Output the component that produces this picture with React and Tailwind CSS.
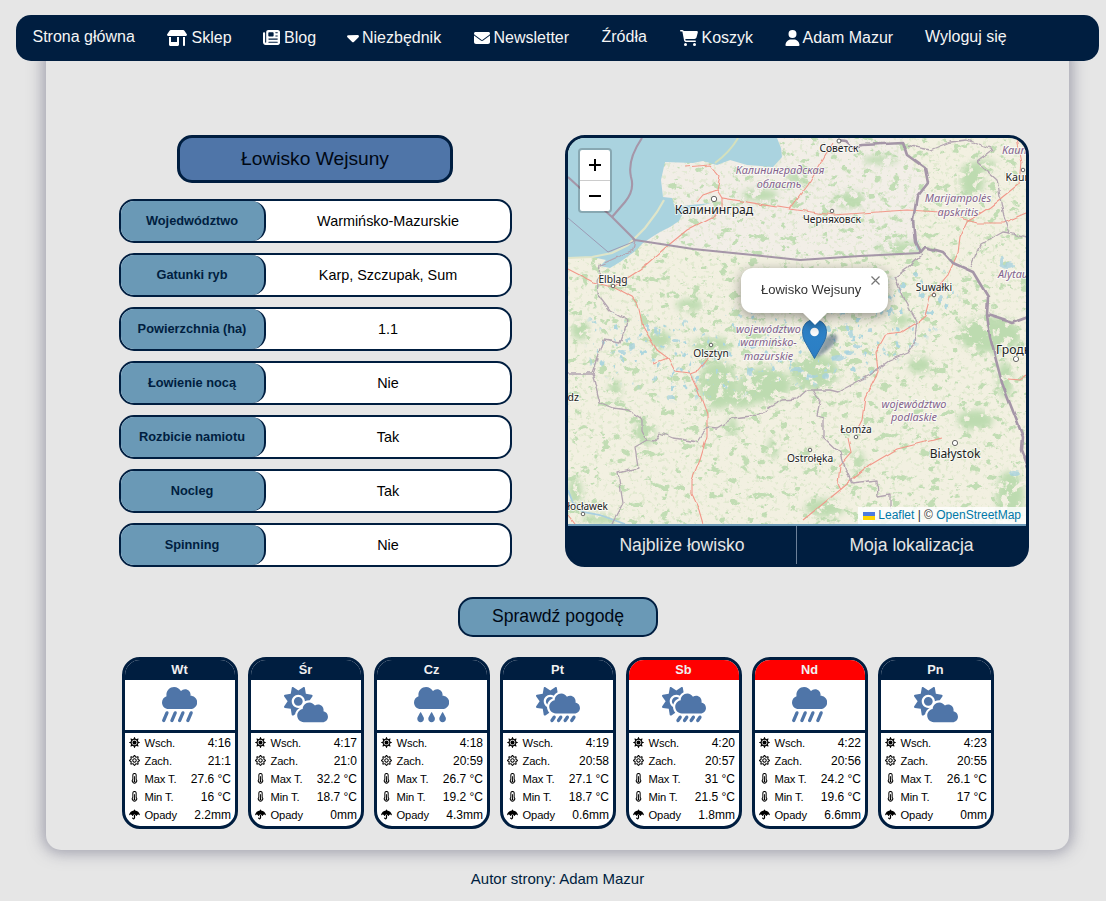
import React from "react";
import {
  FaShop,
  FaNewspaper,
  FaCaretDown,
  FaEnvelope,
  FaCartShopping,
  FaUser,
  FaCloudShowersHeavy,
  FaCloudSun,
  FaCloudRain,
  FaCloudSunRain,
} from "react-icons/fa6";
import { FaSun, FaRegSun, FaUmbrella } from "react-icons/fa";

const NAV = [
  { label: "Strona główna", box: "w-[134.5px]" },
  { label: "Sklep", Icon: FaShop, icon: "w-[20px] h-[16px] mr-[4.5px]", box: "w-[96px]" },
  { label: "Blog", Icon: FaNewspaper, icon: "w-[17px] h-[17px] mr-[4px]", box: "w-[84px]" },
  { label: "Niezbędnik", Icon: FaCaretDown, icon: "w-[12px] h-[19px] mr-[3px]", box: "w-[126.5px]" },
  { label: "Newsletter", Icon: FaEnvelope, icon: "w-[16px] h-[16px] mr-[4px]", box: "w-[128px]" },
  { label: "Źródła", box: "w-[78px]" },
  { label: "Koszyk", Icon: FaCartShopping, icon: "w-[18px] h-[16px] mr-[4px]", box: "w-[105.5px]" },
  { label: "Adam Mazur", Icon: FaUser, icon: "w-[15px] h-[16px] mr-[2.5px]", box: "w-[140px]" },
  { label: "Wyloguj się", box: "w-[100px]" },
];

const DETAILS = [
  ["Wojedwództwo", "Warmińsko-Mazurskie"],
  ["Gatunki ryb", "Karp, Szczupak, Sum"],
  ["Powierzchnia (ha)", "1.1"],
  ["Łowienie nocą", "Nie"],
  ["Rozbicie namiotu", "Tak"],
  ["Nocleg", "Tak"],
  ["Spinning", "Nie"],
];

const DAYS = [
  { day: "Wt", Icon: FaCloudShowersHeavy, values: ["4:16", "21:1", "27.6 °C", "16 °C", "2.2mm"] },
  { day: "Śr", Icon: FaCloudSun, wide: true, values: ["4:17", "21:0", "32.2 °C", "18.7 °C", "0mm"] },
  { day: "Cz", Icon: FaCloudRain, values: ["4:18", "20:59", "26.7 °C", "19.2 °C", "4.3mm"] },
  { day: "Pt", Icon: FaCloudSunRain, wide: true, values: ["4:19", "20:58", "27.1 °C", "18.7 °C", "0.6mm"] },
  { day: "Sb", Icon: FaCloudSunRain, wide: true, weekend: true, values: ["4:20", "20:57", "31 °C", "21.5 °C", "1.8mm"] },
  { day: "Nd", Icon: FaCloudShowersHeavy, weekend: true, values: ["4:22", "20:56", "24.2 °C", "19.6 °C", "6.6mm"] },
  { day: "Pn", Icon: FaCloudSun, wide: true, values: ["4:23", "20:55", "26.1 °C", "17 °C", "0mm"] },
];

function Thermometer({ className }) {
  return (
    <svg viewBox="0 0 12 12" className={className} fill="none" stroke="currentColor">
      <path d="M4.2 6.9V2.3a1.8 1.8 0 0 1 3.6 0v4.6a2.4 2.4 0 1 1-3.6 0Z" strokeWidth="1.1" />
      <path d="M6 3.5v5.7" strokeWidth="1" />
      <circle cx="6" cy="8.9" r="1" fill="currentColor" stroke="none" />
    </svg>
  );
}

const METRICS = [
  ["Wsch.", FaSun],
  ["Zach.", FaRegSun],
  ["Max T.", Thermometer],
  ["Min T.", Thermometer],
  ["Opady", FaUmbrella],
];

function Nav() {
  return (
    <nav className="relative z-10 ml-[16px] flex h-[46px] w-[1083px] rounded-[15px] bg-[#001e40] pl-[16.5px] text-[16px] leading-[20px] text-[#f5f5f5]">
      {NAV.map(({ label, Icon, icon, box }) => (
        <a key={label} className={`${box} flex shrink-0 items-center whitespace-nowrap ${Icon ? "pb-[1px]" : "pb-[3px]"}`}>
          {Icon && <Icon className={`${icon} shrink-0 text-white`} />}
          {label}
        </a>
      ))}
    </nav>
  );
}

const SEA =
  "M568 138 L777 138 L781 148 L782 157 L773 167 L747 165 L730 160 L717 165 L703 161 L693 163 L665 162 L661 180 L663 197 L672 198 L675 208 L690 205 L712 203 L690 208 L683 213 L679 221 L670 227 L660 232 L652 237 L643 243 L634 252 L627 257 L620 262 L610 268 L600 266 L606 260 L592 257 L568 257 Z";

const MAJOR_BORDERS = [
  "M568 177 L580 188 L612 217 L635 240 L693 249 L753 255 L800 260 L860 256 L920 253",
  "M920 253 L925 247 L943 252 L953 263 L973 272 L988 297 L987 315 L1000 319 L1012 323 L1028 317",
  "M987 315 L990 337 L1002 383 L1023 437 L1022 450 L1028 467",
  "M920 253 L915 243 L913 220 L917 197 L928 183 L925 168 L907 155 L903 143 L863 145 L853 147 L846 141 L838 140",
  "M642 138 Q627 160 631 177 Q635 190 625 202 L612 217",
];

const MINOR_BORDERS = [
  "M922 255 L908 268 L895 277 L905 300 L918 323 L915 342 L907 353 L890 360 L870 375 L838 392 L830 390 L807 390 L797 399 L782 400 L770 407 L760 415 L733 418 L717 428 L707 427 L697 442 L673 438 L660 433 L655 441 L647 440 L642 430 L642 420 L627 410 L613 408 L600 403 L592 373 L568 373",
  "M592 373 L603 340 L620 343 L628 320 L610 310 L597 293 L600 265 L633 250 L635 240",
  "M647 440 L635 447 L638 468 L618 473 L623 503 L612 524",
  "M813 390 L820 401 L817 415 L823 417 L823 437 L840 453 L843 463 L852 483 L877 480 L878 497 L890 495 L890 510",
  "M907 145 L930 150 L950 142 L967 140 L993 150 L977 162 L997 180 L1003 213 L1010 233 L1026 238",
  "M970 268 L980 245 L1003 232 L1010 233",
];

const ROADS = [
  "M568 269 L593 282 L613 287 L632 297 L638 305 L643 327 L657 350 L668 358 L675 371 L690 373 L698 370 L706 360 L711 350",
  "M690 373 L698 390 L707 414 L707 437 L700 460 L692 480 L692 495 L699 510 L703 524",
  "M613 287 L640 270 L665 248 L687 230 L712 217 L722 207 L722 198 L790 209 L833 215 L907 210 L940 212 L977 223 L1003 223 L1026 213",
  "M790 209 L808 185 L833 143",
  "M685 167 L710 165 L720 177 L717 190 L703 195 L697 202",
  "M717 190 L722 198",
  "M967 222 L960 237 L958 253 L947 277 L930 297 L925 316 L918 322 L902 332 L886 334 L876 352 L878 372 L865 397 L862 420 L858 428",
  "M848 438 L851 452 L840 465 L838 484 L841 490",
  "M803 520 L840 490 L870 465 L897 449 L942 438",
  "M1017 138 L1022 163 L1020 183 L990 207 L967 222",
  "M568 515 L575 524",
  "M654 363 L668 358",
  "M1008 379 L1019 380 L1026 375",
];

const LAKES = [
  [797, 370, 7, 2], [812, 376, 5, 2], [838, 358, 6, 3], [849, 353, 5, 2], [857, 346, 4, 2], [826, 376, 3, 3],
  [1008, 266, 6, 3], [1002, 262, 2, 5], [1014, 473, 6, 2], [622, 352, 4, 2], [632, 346, 3, 4], [671, 397, 3, 2],
  [676, 340, 3, 2], [703, 365, 2, 3], [917, 244, 2, 5], [940, 300, 2, 4], [915, 275, 3, 2], [730, 353, 2, 2],
  [656, 330, 2, 3], [870, 330, 3, 2], [851, 334, 2, 4], [900, 290, 2, 3], [750, 372, 2, 4],
];

const FORESTS = [
  [718, 385, 20, 24], [765, 385, 26, 18], [815, 372, 24, 18], [740, 400, 16, 8], [660, 340, 12, 9], [645, 432, 10, 14],
  [990, 335, 32, 18], [972, 180, 12, 18], [900, 248, 24, 6], [850, 200, 16, 8], [975, 420, 18, 10], [1010, 495, 14, 24],
  [575, 492, 7, 14], [920, 365, 12, 8], [858, 462, 6, 12], [985, 165, 12, 5], [880, 160, 18, 4], [760, 195, 18, 6],
  [1005, 380, 8, 18], [732, 428, 5, 11], [712, 345, 20, 8], [690, 305, 14, 6], [615, 390, 6, 10], [800, 178, 14, 6],
  [825, 508, 20, 9], [580, 330, 9, 10], [600, 519, 18, 5], [773, 448, 5, 11], [770, 155, 9, 9], [900, 320, 10, 6],
];

const TOWNS = [
  [839, 141, 2], [714, 199, 2.7], [832, 211, 1.8], [613, 286, 1.8], [934, 295, 1.8], [1023, 170, 1.8], [711, 345, 1.8],
  [1016, 359, 2.6], [856, 437, 1.8], [955, 443, 2.6], [810, 450, 1.8], [583, 514, 1.8],
];

const CITIES = [
  [839, 152, "Советск", 10.2], [714, 213.5, "Калининград", 12.2], [832, 223, "Черняховск", 10.2], [613, 282.5, "Elbląg", 10.2],
  [934, 291, "Suwałki", 10.2], [711, 356.5, "Olsztyn", 10.2], [856, 433, "Łomża", 10.2], [955, 457.5, "Białystok", 12],
  [810, 462, "Ostrołęka", 10.2],
];

const REGIONS = [
  [780, 174, "Калининградская"], [779, 187.5, "область"], [958, 202, "Marijampolės"], [958, 215.5, "apskritis"],
  [768.5, 332.5, "województwo"], [768.5, 346, "warmińsko-"], [768.5, 359.5, "mazurskie"], [914, 407.5, "województwo"],
  [914, 421, "podlaskie"],
];

function MapTiles() {
  return (
    <svg viewBox="568 138 458 386" className="block h-[386px] w-[458px]">
      <defs>
        <filter id="forest" x="0" y="0" width="100%" height="100%" colorInterpolationFilters="sRGB">
          <feTurbulence type="fractalNoise" baseFrequency="0.1 0.12" numOctaves="5" seed="11" />
          <feColorMatrix values="0 0 0 0 0.74  0 0 0 0 0.86  0 0 0 0 0.69  13 0 0 0 -8.1" />
        </filter>
        <filter id="woods" x="0" y="0" width="100%" height="100%" colorInterpolationFilters="sRGB">
          <feTurbulence type="fractalNoise" baseFrequency="0.11" numOctaves="5" seed="5" />
          <feColorMatrix values="0 0 0 0 0.74  0 0 0 0 0.86  0 0 0 0 0.69  12 0 0 0 -4.5" />
        </filter>
        <filter id="meadow" x="0" y="0" width="100%" height="100%" colorInterpolationFilters="sRGB">
          <feTurbulence type="fractalNoise" baseFrequency="0.24" numOctaves="3" seed="23" />
          <feColorMatrix values="0 0 0 0 0.82  0 0 0 0 0.89  0 0 0 0 0.75  8 0 0 0 -4.7" />
        </filter>
        <filter id="ponds" x="0" y="0" width="100%" height="100%" colorInterpolationFilters="sRGB">
          <feTurbulence type="fractalNoise" baseFrequency="0.16 0.12" numOctaves="3" seed="37" />
          <feColorMatrix values="0 0 0 0 0.68  0 0 0 0 0.84  0 0 0 0 0.87  12 0 0 0 -8" />
        </filter>
        <filter id="jagged" x="-5%" y="-5%" width="110%" height="110%">
          <feTurbulence type="fractalNoise" baseFrequency="0.14" numOctaves="1" seed="3" />
          <feDisplacementMap in="SourceGraphic" scale="6" xChannelSelector="R" yChannelSelector="G" />
        </filter>
        <filter id="winding" x="-5%" y="-5%" width="110%" height="110%">
          <feTurbulence type="fractalNoise" baseFrequency="0.08" numOctaves="1" seed="9" />
          <feDisplacementMap in="SourceGraphic" scale="4" xChannelSelector="R" yChannelSelector="G" />
        </filter>
        <filter id="soft" x="-20%" y="-20%" width="140%" height="140%">
          <feGaussianBlur stdDeviation="3" />
        </filter>
        <filter id="pinShadow" x="-50%" y="-50%" width="200%" height="200%">
          <feGaussianBlur stdDeviation="1.8" />
        </filter>
        <mask id="woodsArea">
          <g fill="#fff" filter="url(#soft)">
            {FORESTS.map(([x, y, rx, ry], i) => (
              <ellipse key={i} cx={x} cy={y} rx={rx} ry={ry} />
            ))}
          </g>
        </mask>
        <mask id="lakeArea">
          <path d="M590 310 L690 320 L790 300 L950 270 L960 310 L870 380 L680 400 L590 370Z" fill="#fff" filter="url(#soft)" />
        </mask>
        <linearGradient id="pin" x1="0" y1="0" x2="0" y2="1">
          <stop offset="0" stopColor="#2e83c8" />
          <stop offset="1" stopColor="#2b7ec4" />
        </linearGradient>
      </defs>

      <rect x="568" y="138" width="458" height="386" fill="#f2f0e1" />
      <path d="M635 240 L693 248 L753 255 L800 260 L920 253 L913 220 L928 183 L907 155 L903 138 L650 138Z" fill="#f2eee7" />
      <rect x="568" y="138" width="458" height="386" filter="url(#meadow)" opacity="0.5" />
      <rect x="568" y="138" width="458" height="386" filter="url(#forest)" opacity="0.9" />
      <g mask="url(#woodsArea)">
        <rect x="568" y="138" width="458" height="386" filter="url(#woods)" />
      </g>
      <g mask="url(#lakeArea)">
        <rect x="568" y="138" width="458" height="386" filter="url(#ponds)" />
      </g>
      <g fill="#a9d3df" filter="url(#jagged)" opacity="0.8">
        {LAKES.map(([x, y, rx, ry], i) => (
          <ellipse key={i} cx={x} cy={y} rx={rx} ry={ry} />
        ))}
      </g>
      <path d={SEA} fill="#aad3df" />
      <path d="M568 258 L592 257 L612 253 L628 245 L645 228 L657 212 L664 200" fill="none" stroke="#dfe5c9" strokeWidth="2.2" />
      <path d="M715 163 Q730 152 738 138" fill="none" stroke="#d4e0bd" strokeWidth="2" />
      <path d="M568 490 L573 503 L583 512 L600 515 L625 524" fill="none" stroke="#a9cfe0" strokeWidth="1.8" />

      <g fill="none" stroke="#f2988a" strokeWidth="1.1" filter="url(#winding)">
        {ROADS.map((d) => (
          <path key={d} d={d} />
        ))}
      </g>
      <g fill="none" stroke="#b3a5b1" strokeWidth="1.3" strokeLinejoin="round" filter="url(#jagged)">
        {MINOR_BORDERS.map((d) => (
          <path key={d} d={d} />
        ))}
      </g>
      <path d="M568 218 L608 252 L633 242" fill="none" stroke="#9a94b0" strokeWidth="0.9" />
      <g fill="none" stroke="#a596a8" strokeWidth="2.1" strokeLinejoin="round">
        <path d={MAJOR_BORDERS[0]} />
        <path d={MAJOR_BORDERS[4]} />
        <g filter="url(#winding)" strokeWidth="2.6">
          <path d={MAJOR_BORDERS[1]} />
          <path d={MAJOR_BORDERS[2]} />
          <path d={MAJOR_BORDERS[3]} />
        </g>
      </g>

      {TOWNS.map(([x, y, r]) => (
        <circle key={`${x}-${y}`} cx={x} cy={y} r={r} fill="#fff" stroke="#555" strokeWidth="0.9" />
      ))}
      <g
        className="font-['Noto_Sans',sans-serif]"
        stroke="#fff"
        strokeOpacity="0.7"
        strokeWidth="2"
        strokeLinejoin="round"
        paintOrder="stroke"
      >
        <g fill="#222" textAnchor="middle">
          {CITIES.map(([x, y, name, size]) => (
            <text key={name} x={x} y={y} fontSize={size}>{name}</text>
          ))}
        </g>
        <g fill="#222" fontSize="10.5">
          <text x="1005.5" y="181">Kaunas</text>
          <text x="996" y="354" fontSize="12.2">Гродно</text>
          <text x="567.5" y="401">dz</text>
          <text x="567.5" y="510" fontSize="10">łocławek</text>
        </g>
        <g fill="#84638c" fontStyle="italic" fontSize="10.9">
          <g textAnchor="middle">
            {REGIONS.map(([x, y, name]) => (
              <text key={`${name}-${y}`} x={x} y={y}>{name}</text>
            ))}
          </g>
          <text x="1002" y="154">Kauno</text>
          <text x="998" y="278">Alytaus</text>
        </g>
      </g>

      <path d="M815 359 L823 341 Q832 330 837 336 Q840 343 815 359Z" fill="#2b4a66" opacity="0.5" filter="url(#pinShadow)" />
      <path
        d="M814.5 358.5 L804.6 341 Q802.5 337 802.5 331.5 A12 12 0 0 1 826.5 331.5 Q826.5 337 824.4 341Z"
        fill="url(#pin)"
        stroke="#2a6ca5"
        strokeWidth="1"
      />
      <circle cx="814.5" cy="332" r="4.3" fill="#fff" />
    </svg>
  );
}

function MapPanel() {
  return (
    <section className="h-[432px] w-[464px] overflow-hidden rounded-[20px] border-[3px] border-[#001e40] bg-[#001e40]">
      <div className="relative h-[388px] overflow-hidden border-b-2 border-[#6c9ab8]">
        <MapTiles />
        <div className="absolute left-[10px] top-[10px] w-[34px] overflow-hidden rounded-[4px] border-2 border-black/20 bg-white bg-clip-padding">
          <div className="flex h-[31px] items-center justify-center border-b border-[#ccc]">
            <svg viewBox="0 0 12 12" className="h-[12px] w-[12px]"><path d="M0 6h12M6 0v12" stroke="#000" strokeWidth="2" /></svg>
          </div>
          <div className="flex h-[30px] items-center justify-center">
            <svg viewBox="0 0 12 12" className="h-[12px] w-[12px]"><path d="M0 6h12" stroke="#000" strokeWidth="2" /></svg>
          </div>
        </div>
        <div className="absolute left-[173px] top-[130px] h-[57px] w-[147px] drop-shadow-[0_3px_6px_rgba(0,0,0,0.4)]">
          <div className="relative flex h-[45px] items-center rounded-[12px] bg-white pb-[2px] pl-[20px] text-[13px] text-[#333]">
            <span className="whitespace-nowrap">Łowisko Wejsuny</span>
            <svg viewBox="0 0 9 9" className="absolute right-[8px] top-[8px] h-[9px] w-[9px]">
              <path d="M0.5 0.5 8.5 8.5M8.5 0.5 0.5 8.5" stroke="#757575" strokeWidth="1.2" />
            </svg>
          </div>
          <svg viewBox="0 0 24 12" className="mx-auto block h-[12px] w-[24px]"><path d="M0 0h24L12 12Z" fill="#fff" /></svg>
        </div>
        <div className="absolute bottom-0 right-0 flex h-[17px] items-center whitespace-pre bg-white/80 px-[5px] text-[12px] leading-[17px] text-[#333]">
          <svg viewBox="0 0 12 8" className="mr-[3px] h-[8px] w-[12px]">
            <path d="M0 0h12v4H0z" fill="#4c7be1" />
            <path d="M0 4h12v4H0z" fill="#ffd500" />
          </svg>
          <span className="text-[#0078a8]">Leaflet</span>
          {" | © "}
          <span className="text-[#0078a8]">OpenStreetMap</span>
        </div>
      </div>
      <div className="flex h-[38px] text-[17.6px] text-[#e6e6e6]">
        <button className="flex w-[229px] items-center justify-center border-r border-[#6c8099]">Najbliże łowisko</button>
        <button className="flex flex-1 items-center justify-center">Moja lokalizacja</button>
      </div>
    </section>
  );
}

function Details() {
  return (
    <section className="flex w-[393px] flex-col items-center">
      <h1 className="mr-[2px] flex h-[48px] w-[276px] items-center justify-center rounded-[15px] border-[3px] border-[#001e40] bg-[#4f75a8] pl-px text-[19.2px] text-[#000814]">
        Łowisko Wejsuny
      </h1>
      <div className="mt-[16px] flex w-full flex-col gap-[10px]">
        {DETAILS.map(([name, value]) => (
          <div key={name} className="flex h-[44px] overflow-hidden rounded-[15px] border-2 border-[#001e40] bg-white">
            <div className="flex w-[145px] items-center justify-center rounded-r-[14px] border-r-2 border-[#001e40] bg-[#6a99b6] pb-[1px] pr-px text-[12.8px] font-bold text-[#001e40]">
              {name}
            </div>
            <div className="flex flex-1 items-center justify-center pt-[1px] text-[14.4px] text-black">{value}</div>
          </div>
        ))}
      </div>
    </section>
  );
}

function DayCard({ day, Icon, wide, weekend, values }) {
  return (
    <article className="h-[172px] w-[116px] overflow-hidden rounded-[18px] border-[3px] border-[#001e40] bg-white">
      <h2 className={`flex h-[20px] items-center justify-center pb-[1px] pr-px text-[12.8px] font-bold text-[#f0f0f0] ${weekend ? "bg-[#ff0000]" : "bg-[#001e40]"}`}>
        {day}
      </h2>
      <div className="flex h-[53px] items-center justify-center border-b-[3px] border-[#001e40] pr-[1px]">
        <Icon className={`text-[#4f75a8] ${wide ? "h-[35.2px] w-[44px]" : "h-[35.2px] w-[35.2px]"}`} />
      </div>
      <ul className="px-[4px] pt-[1px] text-black">
        {METRICS.map(([name, MetricIcon], i) => (
          <li key={name} className="flex h-[18px] items-center text-[11.2px]">
            <MetricIcon className="mb-px mr-[4.5px] h-[11px] w-[11px] shrink-0" />
            <span className="tracking-[-0.01em]">{name}</span>
            <span className="ml-auto whitespace-nowrap text-[12px]">{values[i]}</span>
          </li>
        ))}
      </ul>
    </article>
  );
}

export default function App() {
  return (
    <div className="h-[901px] w-[1106px] overflow-hidden bg-[#e6e6e6] pt-[15px] font-['Liberation_Sans',Arial,sans-serif]">
      <Nav />
      <main className="-mt-[20px] ml-[46px] h-[809px] w-[1023px] rounded-[15px] pt-[94px] shadow-[0_0_15px_3px_rgba(90,90,115,0.5)]">
        <div className="ml-[73px] flex gap-[53px]">
          <Details />
          <MapPanel />
        </div>
        <button className="ml-[412px] mt-[30px] flex h-[40px] w-[200px] items-center justify-center rounded-[15px] border-2 border-[#001e40] bg-[#6a99b6] pb-[2px] text-[17.6px] text-[#000814]">
          Sprawdź pogodę
        </button>
        <div className="ml-[76px] mt-[20px] flex gap-[10px]">
          {DAYS.map((d) => (
            <DayCard key={d.day} {...d} />
          ))}
        </div>
      </main>
      <footer className="mt-[20px] pl-[9px] text-center text-[15px] leading-[18px] text-[#001e40]">Autor strony: Adam Mazur</footer>
    </div>
  );
}
